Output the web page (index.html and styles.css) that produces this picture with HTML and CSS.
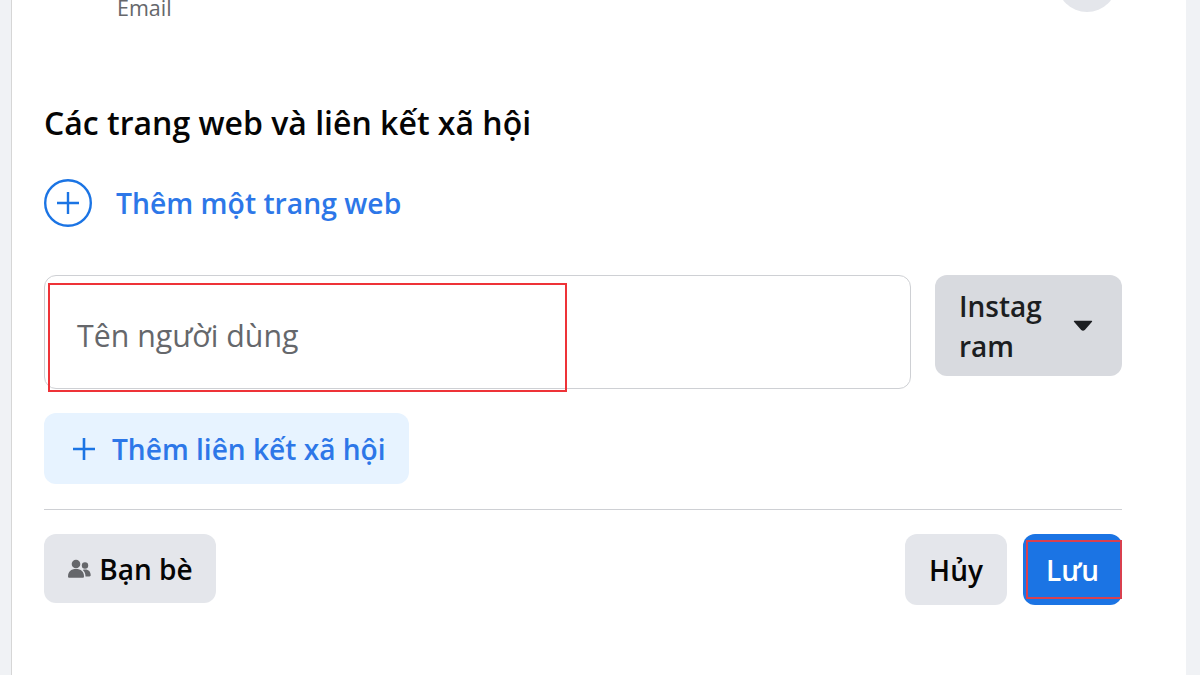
FILE: index.html
```html
<!DOCTYPE html>
<html lang="vi">
<head>
  <meta charset="UTF-8">
  <meta name="viewport" content="width=device-width, initial-scale=1.0">
  <title>Các trang web và liên kết xã hội</title>
  <link rel="stylesheet" href="styles.css">
</head>
<body>
  <div class="card">
    <div class="top-row">
      <span class="email-label">Email</span>
      <span class="edit-circle"></span>
    </div>

    <h2 class="section-title">Các trang web và liên kết xã hội</h2>

    <div class="add-site">
      <svg class="add-site-icon" viewBox="0 0 48 48" width="48" height="48">
        <circle cx="24" cy="24" r="22.8" fill="none" stroke="#1b74e4" stroke-width="2.4"/>
        <path d="M24 13v22M13 24h22" fill="none" stroke="#1b74e4" stroke-width="2.4"/>
      </svg>
      <span class="add-site-text">Thêm một trang web</span>
    </div>

    <div class="social-row">
      <div class="username-box">
        <span class="username-placeholder">Tên người dùng</span>
        <div class="mark mark-input"></div>
      </div>
      <div class="network-select">
        <span class="network-name">Instag<br>ram</span>
        <svg class="caret" viewBox="0 0 20 12" width="20" height="12">
          <path d="M1.500 .8h17q1.200 0 .5 1l-7.200 8.300q-1.800 1.500-3.600 0L1 1.800q-.7-1 .5-1z" fill="#1c1e21"/>
        </svg>
      </div>
    </div>

    <div class="add-social">
      <svg class="add-social-icon" viewBox="0 0 22 22" width="22" height="22">
        <path d="M11 0v22M0 11h22" fill="none" stroke="#1b74e4" stroke-width="2.600"/>
      </svg>
      <span>Thêm liên kết xã hội</span>
    </div>

    <hr class="divider">

    <div class="footer-row">
      <div class="btn btn-privacy">
        <svg class="friends-icon" viewBox="0 0 24 20" width="24" height="20">
          <circle cx="9" cy="5" r="4.300" fill="#65676b"/>
          <circle cx="18" cy="6.500" r="3.200" fill="#65676b"/>
          <path d="M1 17.500c0-5 3-7.500 8-7.500s8 2.500 8 7.500c0 .8-.6 1.300-1.300 1.300H2.300c-.7 0-1.300-.5-1.300-1.300z" fill="#65676b"/>
          <path d="M18.500 17.500h4c.7 0 1.200-.5 1.200-1.200 0-3.500-2-5.800-5.500-5.800-.9 0-1.700.1-2.400.4 1.700 1.500 2.700 3.600 2.700 6.600z" fill="#65676b"/>
        </svg>
        <span>Bạn bè</span>
      </div>
      <div class="footer-actions">
        <div class="btn btn-cancel">Hủy</div>
        <div class="btn btn-save">
          Lưu
          <div class="mark mark-save"></div>
        </div>
      </div>
    </div>
  </div>
</body>
</html>
```
FILE: styles.css
```css
html, body {
  margin: 0;
  height: 100%;
  overflow: hidden;
}

body {
  background-color: #f0f2f5;
  font-family: "Open Sans", "Noto Sans", sans-serif;
  color: #050505;
}

.card {
  box-sizing: border-box;
  width: 1175px;
  height: 675px;
  margin-left: 11px;
  padding: 0 64px 0 32px;
  background-color: #fff;
  border-left: 1px solid #d6d6d6;
  overflow: hidden;
}

.top-row {
  display: flex;
  justify-content: space-between;
  align-items: flex-end;
  height: 60px;
  margin-top: -48px;
  padding-right: 5px;
}

.email-label {
  margin: 0 0 -8px 73px;
  font-size: 21.500px;
  line-height: 24px;
  color: #65676b;
}

.edit-circle {
  width: 60px;
  height: 60px;
  border-radius: 50%;
  background-color: #e4e6eb;
}

.section-title {
  margin: 91px 0 0;
  font-size: 32px;
  line-height: 40px;
  font-weight: 600;
}

.add-site {
  display: flex;
  align-items: center;
  gap: 24px;
  margin-top: 36px;
}

.add-site-text {
  font-size: 28.300px;
  font-weight: 600;
  color: #2d77e8;
}

.social-row {
  display: flex;
  align-items: flex-start;
  gap: 24px;
  margin-top: 48px;
}

.username-box {
  position: relative;
  display: flex;
  align-items: center;
  box-sizing: border-box;
  width: 867px;
  height: 114px;
  padding: 6px 0 0 32px;
  border: 1px solid #ced0d4;
  border-radius: 12px;
}

.username-placeholder {
  font-size: 30.300px;
  color: #65676b;
}

.network-select {
  display: flex;
  align-items: center;
  justify-content: space-between;
  box-sizing: border-box;
  width: 187px;
  height: 101px;
  padding: 0 29px 0 24px;
  border-radius: 12px;
  background-color: #d8dadf;
}

.network-name {
  font-size: 28px;
  line-height: 40px;
  font-weight: 600;
  color: #1c1e21;
}

.add-social {
  display: flex;
  align-items: center;
  gap: 17px;
  width: 365px;
  height: 71px;
  box-sizing: border-box;
  margin-top: 24px;
  padding-left: 29px;
  border-radius: 12px;
  background-color: #e7f3ff;
  font-size: 28.100px;
  font-weight: 600;
  color: #2d77e8;
}

.divider {
  height: 1px;
  margin: 25px 0 24px;
  border: 0;
  background-color: #ced0d4;
}

.footer-row {
  display: flex;
  justify-content: space-between;
  align-items: flex-start;
}

.footer-actions {
  display: flex;
  gap: 16px;
}

.btn {
  display: flex;
  align-items: center;
  justify-content: center;
  box-sizing: border-box;
  border-radius: 12px;
  font-size: 28px;
  font-weight: 600;
}

.btn-privacy {
  gap: 8px;
  width: 172px;
  height: 69px;
  background-color: #e4e6eb;
}

.btn-cancel {
  width: 102px;
  height: 71px;
  background-color: #e4e6eb;
}

.btn-save {
  position: relative;
  width: 99px;
  height: 71px;
  background-color: #1b74e4;
  color: #fff;
}

.mark {
  position: absolute;
  box-sizing: border-box;
}

.mark-input {
  left: 3px;
  top: 7px;
  width: 519px;
  height: 109px;
  border: 2px solid #ee3338;
}

.mark-save {
  left: 3px;
  top: 6px;
  width: 96px;
  height: 59px;
  border: 2px solid #d9404f;
}
```
